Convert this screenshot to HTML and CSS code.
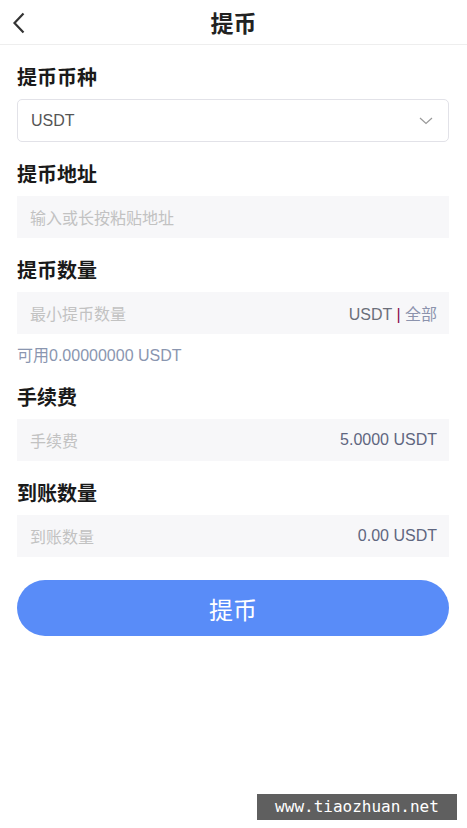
FILE: index.html
```html
<!DOCTYPE html>
<html lang="zh-CN">
<head>
  <meta charset="UTF-8" />
  <meta name="viewport" content="width=device-width, initial-scale=1.0"/>
  <title>提币</title>
  <link rel="stylesheet" href="styles.css">
</head>
<body>

  <header class="topbar">
    <a href="#" class="back">
      <svg width="14" height="22" viewBox="0 0 14 22"><path d="M11.5 1.5 L2.5 11 L11.5 20.5" fill="none" stroke="#333" stroke-width="2.2"/></svg>
    </a>
    <h1>提币</h1>
  </header>

  <main class="form">
    <div class="field">
      <h2>提币币种</h2>
      <div class="select">
        <span>USDT</span>
        <svg width="14" height="8" viewBox="0 0 14 8"><path d="M1 1 L7 6.5 L13 1" fill="none" stroke="#999" stroke-width="1.2"/></svg>
      </div>
    </div>

    <div class="field">
      <h2>提币地址</h2>
      <div class="input">
        <span class="ph">输入或长按粘贴地址</span>
      </div>
    </div>

    <div class="field">
      <h2>提币数量</h2>
      <div class="input">
        <span class="ph">最小提币数量</span>
        <span class="unit">USDT <i class="sep">|</i> <a href="#" class="all">全部</a></span>
      </div>
      <p class="avail">可用0.00000000 USDT</p>
    </div>

    <div class="field">
      <h2>手续费</h2>
      <div class="input">
        <span class="ph">手续费</span>
        <span class="value">5.0000 USDT</span>
      </div>
    </div>

    <div class="field last">
      <h2>到账数量</h2>
      <div class="input">
        <span class="ph">到账数量</span>
        <span class="value">0.00 USDT</span>
      </div>
    </div>

    <button class="submit-btn">提币</button>
  </main>

  <div class="watermark">www.tiaozhuan.net</div>

</body>
</html>
```

FILE: styles.css
```css
body {
  font-family: "Liberation Sans", Arial, "Noto Sans CJK SC", sans-serif;
  margin: 0;
  background: #fff;
  color: #333;
}
.topbar {
  position: relative;
  height: 44px;
  border-bottom: 1px solid #eeeeee;
  display: flex;
  align-items: center;
  justify-content: center;
}
.topbar h1 {
  margin: 0;
  font-size: 23px;
  font-weight: bold;
  color: #222;
}
.back {
  position: absolute;
  left: 12px;
  top: 12px;
  display: flex;
}
.form {
  padding: 20px 18px 0 17px;
  display: flex;
  flex-direction: column;
}
.field {
  margin-bottom: 20px;
}
.field.last {
  margin-bottom: 23px;
}
.field h2 {
  margin: 0 0 8px;
  font-size: 20px;
  line-height: 26px;
  font-weight: bold;
  color: #1a1a1a;
}
.select {
  height: 41px;
  border: 1px solid #e2e2e8;
  border-radius: 5px;
  display: flex;
  align-items: center;
  justify-content: space-between;
  padding: 0 15px 0 13px;
  font-size: 16px;
  color: #555;
}
.input {
  height: 42px;
  background: #f7f7f9;
  display: flex;
  align-items: center;
  justify-content: space-between;
  padding: 0 12px 0 13px;
  font-size: 16px;
}
.ph {
  color: #c2c2c2;
}
.unit {
  color: #6b6f7a;
}
.sep {
  font-style: normal;
  color: #8a0a4a;
}
.all {
  color: #8c93ad;
  text-decoration: none;
}
.value {
  color: #5f6680;
}
.avail {
  margin: 12px 0 -1px 0;
  font-size: 16px;
  line-height: 20px;
  color: #8a96b0;
}
.submit-btn {
  height: 56px;
  border: none;
  border-radius: 28px;
  background: #598cf8;
  color: #fff;
  font-family: inherit;
  font-size: 24px;
}
.watermark {
  position: absolute;
  left: 257px;
  top: 794px;
  width: 200px;
  height: 26px;
  background: #5f5f5f;
  color: #fff;
  font-family: "DejaVu Sans Mono", monospace;
  font-size: 16px;
  line-height: 26px;
  text-align: center;
}
```
